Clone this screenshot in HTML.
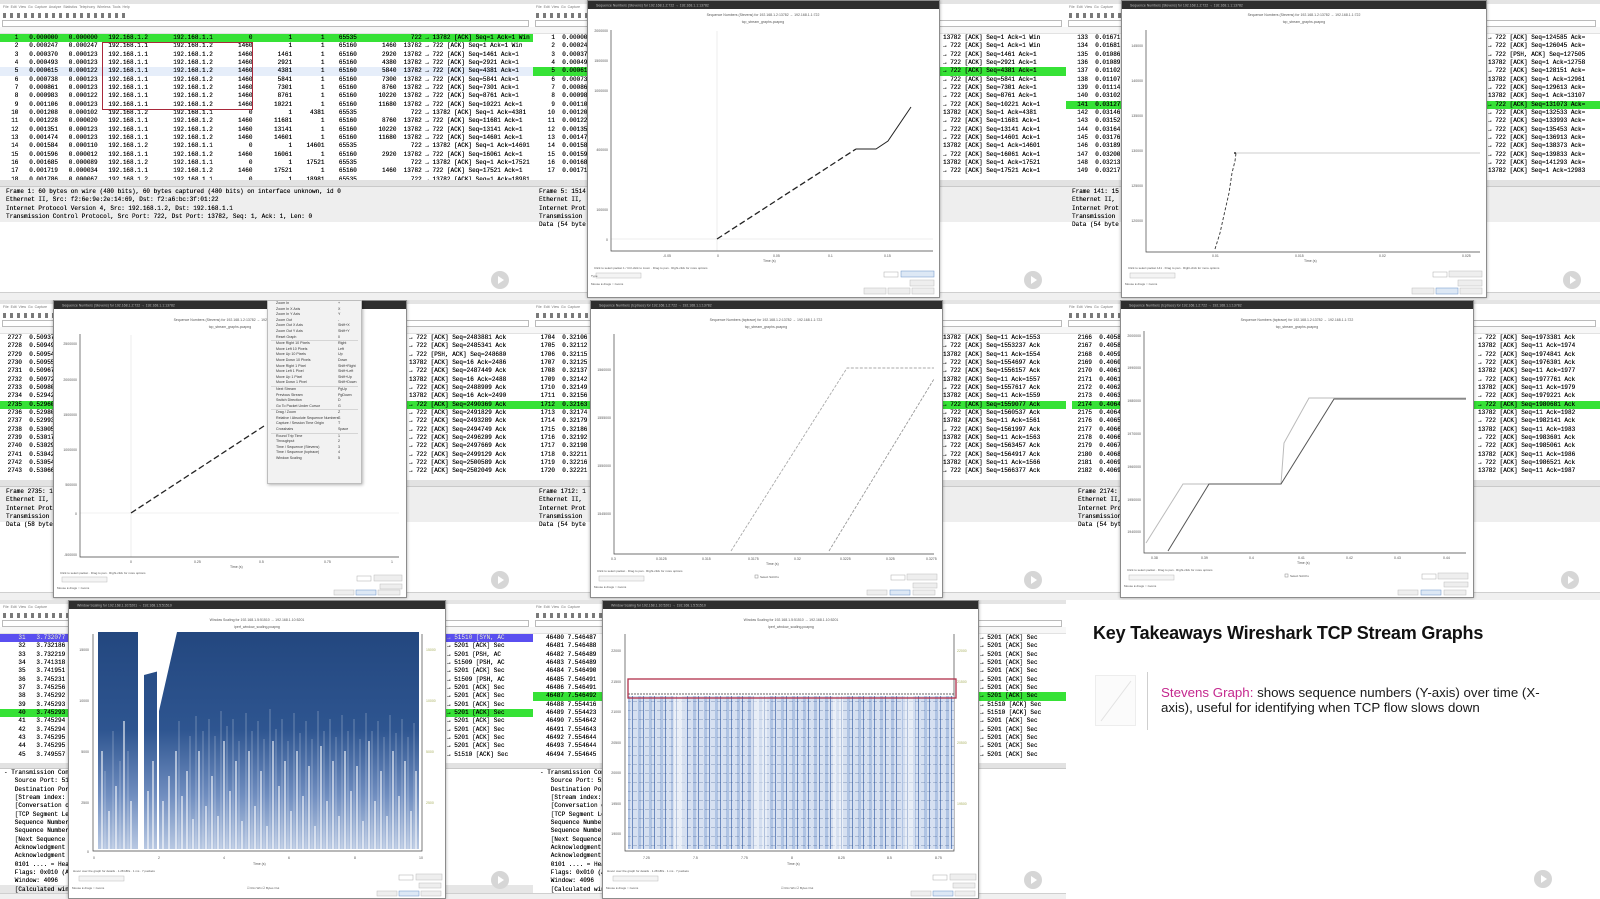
<!DOCTYPE html>
<html><head><meta charset="utf-8"><style>
body{margin:0;width:1600px;height:899px;position:relative;overflow:hidden;background:#fff;font-family:"Liberation Sans",sans-serif}
.c{position:absolute;width:533px;height:300px;overflow:hidden;background:#fff}
.ab{position:absolute}
.ttl{position:absolute;left:0;top:0;right:0;height:4px;background:#e4e4e4}
.mn{position:absolute;left:3px;top:4px;font-size:3.5px;color:#777;white-space:pre;line-height:7px}
.tl{position:absolute;left:3px;top:13px;width:125px;height:5px;background:repeating-linear-gradient(90deg,#7a7a7a 0 3px,transparent 3px 7px)}
.fl{position:absolute;left:2px;right:4px;top:20px;height:5px;border:1px solid #bbb;background:#fff}
.hd{position:absolute;left:0;right:0;top:27px;height:6px;background:#f7f7f7;border-bottom:1px solid #e2e2e2}
pre{margin:0;position:absolute;font:6px/8.33px "Liberation Mono","DejaVu Sans Mono",monospace;color:#000;text-shadow:0 0 .3px #000}
.g{position:absolute;left:0;right:0;height:8.33px;background:#36e236}
.sep{position:absolute;left:0;right:0;top:180px;height:6px;background:#e2e2e2;border-bottom:1px solid #c9c9c9}
.dp{position:absolute;left:0;right:0;top:187px;height:35px;background:#eeeeee}
.sb{position:absolute;left:0;right:0;top:292px;height:8px;background:#f0f0f0;border-top:1px solid #cfcfcf}
.pl{position:absolute;left:491px;top:271px;width:18px;height:18px;border-radius:50%;background:#d6d6d6}
.pl:after{content:"";position:absolute;left:7px;top:5px;border-left:6px solid #fff;border-top:4px solid transparent;border-bottom:4px solid transparent}
.dlg{position:absolute;top:0;background:#fff;border:1px solid #8c8c8c;box-shadow:0 0 3px rgba(0,0,0,.35)}
.dlg svg{display:block}
.menu{position:absolute;background:#f2f2f2;border:1px solid #bdbdbd;font-size:3.6px;color:#333;box-shadow:1px 1px 3px rgba(0,0,0,.3)}
.menu div{height:5.6px;line-height:5.6px;padding-left:8px;position:relative;white-space:nowrap}
.menu div b{position:absolute;left:70px;font-weight:normal}
.menu hr{border:0;border-top:1px solid #d5d5d5;margin:0 3px}
</style></head><body>

<!-- ===== CELL A ===== -->
<div class="c" style="left:0;top:0">
<div class="ttl"></div><div class="mn">File  Edit  View  Go  Capture  Analyze  Statistics  Telephony  Wireless  Tools  Help</div><div class="tl"></div><div class="fl"></div><div class="hd"></div>
<div class="g" style="top:34px"></div>
<div class="ab" style="left:0;right:0;top:67.3px;height:8.33px;background:#e6eefa"></div>
<pre style="left:4px;top:34px;height:146px;overflow:hidden">   1   0.000000   0.000000   192.168.1.2       192.168.1.1          0          1        1    65535               722 → 13782 [ACK] Seq=1 Ack=1 Win
   2   0.000247   0.000247   192.168.1.1       192.168.1.2       1460          1        1    65160       1460  13782 → 722 [ACK] Seq=1 Ack=1 Win
   3   0.000370   0.000123   192.168.1.1       192.168.1.2       1460       1461        1    65160       2920  13782 → 722 [ACK] Seq=1461 Ack=1
   4   0.000493   0.000123   192.168.1.1       192.168.1.2       1460       2921        1    65160       4380  13782 → 722 [ACK] Seq=2921 Ack=1
   5   0.000615   0.000122   192.168.1.1       192.168.1.2       1460       4381        1    65160       5840  13782 → 722 [ACK] Seq=4381 Ack=1
   6   0.000738   0.000123   192.168.1.1       192.168.1.2       1460       5841        1    65160       7300  13782 → 722 [ACK] Seq=5841 Ack=1
   7   0.000861   0.000123   192.168.1.1       192.168.1.2       1460       7301        1    65160       8760  13782 → 722 [ACK] Seq=7301 Ack=1
   8   0.000983   0.000122   192.168.1.1       192.168.1.2       1460       8761        1    65160      10220  13782 → 722 [ACK] Seq=8761 Ack=1
   9   0.001106   0.000123   192.168.1.1       192.168.1.2       1460      10221        1    65160      11680  13782 → 722 [ACK] Seq=10221 Ack=1
  10   0.001208   0.000102   192.168.1.2       192.168.1.1          0          1     4381    65535               722 → 13782 [ACK] Seq=1 Ack=4381
  11   0.001228   0.000020   192.168.1.1       192.168.1.2       1460      11681        1    65160       8760  13782 → 722 [ACK] Seq=11681 Ack=1
  12   0.001351   0.000123   192.168.1.1       192.168.1.2       1460      13141        1    65160      10220  13782 → 722 [ACK] Seq=13141 Ack=1
  13   0.001474   0.000123   192.168.1.1       192.168.1.2       1460      14601        1    65160      11680  13782 → 722 [ACK] Seq=14601 Ack=1
  14   0.001584   0.000110   192.168.1.2       192.168.1.1          0          1    14601    65535               722 → 13782 [ACK] Seq=1 Ack=14601
  15   0.001596   0.000012   192.168.1.1       192.168.1.2       1460      16061        1    65160       2920  13782 → 722 [ACK] Seq=16061 Ack=1
  16   0.001685   0.000089   192.168.1.2       192.168.1.1          0          1    17521    65535               722 → 13782 [ACK] Seq=1 Ack=17521
  17   0.001719   0.000034   192.168.1.1       192.168.1.2       1460      17521        1    65160       1460  13782 → 722 [ACK] Seq=17521 Ack=1
  18   0.001786   0.000067   192.168.1.2       192.168.1.1          0          1    18981    65535               722 → 13782 [ACK] Seq=1 Ack=18981</pre>
<div class="ab" style="left:102px;top:42px;width:149px;height:66px;border:1px solid #a8283a"></div>
<div class="sep"></div><div class="dp"></div>
<pre style="left:6px;top:188px">Frame 1: 60 bytes on wire (480 bits), 60 bytes captured (480 bits) on interface unknown, id 0
Ethernet II, Src: f2:6e:9e:2e:14:69, Dst: f2:a6:bc:3f:01:22
Internet Protocol Version 4, Src: 192.168.1.2, Dst: 192.168.1.1
Transmission Control Protocol, Src Port: 722, Dst Port: 13782, Seq: 1, Ack: 1, Len: 0</pre>
<div class="sb"></div><div class="pl"></div>
</div>

<!-- ===== CELL B ===== -->
<div class="c" style="left:533px;top:0">
<div class="ttl"></div><div class="mn">File  Edit  View  Go  Capture</div><div class="tl"></div><div class="fl"></div><div class="hd"></div>
<div class="g" style="top:67.3px"></div>
<pre style="left:4px;top:34px">    1  0.00000
    2  0.00024
    3  0.00037
    4  0.00049
    5  0.00061
    6  0.00073
    7  0.00086
    8  0.00098
    9  0.00110
   10  0.00120
   11  0.00122
   12  0.00135
   13  0.00147
   14  0.00158
   15  0.00159
   16  0.00168
   17  0.00171</pre>
<pre style="left:410px;top:34px">13782 [ACK] Seq=1 Ack=1 Win
→ 722 [ACK] Seq=1 Ack=1 Win
→ 722 [ACK] Seq=1461 Ack=1
→ 722 [ACK] Seq=2921 Ack=1
→ 722 [ACK] Seq=4381 Ack=1
→ 722 [ACK] Seq=5841 Ack=1
→ 722 [ACK] Seq=7301 Ack=1
→ 722 [ACK] Seq=8761 Ack=1
→ 722 [ACK] Seq=10221 Ack=1
13782 [ACK] Seq=1 Ack=4381
→ 722 [ACK] Seq=11681 Ack=1
→ 722 [ACK] Seq=13141 Ack=1
→ 722 [ACK] Seq=14601 Ack=1
13782 [ACK] Seq=1 Ack=14601
→ 722 [ACK] Seq=16061 Ack=1
13782 [ACK] Seq=1 Ack=17521
→ 722 [ACK] Seq=17521 Ack=1</pre>
<div class="sep"></div><div class="dp"></div>
<pre style="left:6px;top:188px">Frame 5: 1514
Ethernet II,
Internet Prot
Transmission
Data (54 byte</pre>
<div class="sb"></div><div class="pl"></div>
<div class="dlg" style="left:54px;width:351px;height:296px">
<svg width="351" height="296" font-family="Liberation Sans" font-size="3.5" fill="#555">
<rect width="351" height="8" fill="#2e2e2e"/><text x="8" y="5.5" fill="#bbb">Sequence Numbers (Stevens) for 192.168.1.2:722 → 192.168.1.1:13782</text>
<text x="175" y="15" text-anchor="middle">Sequence Numbers (Stevens) for 192.168.1.2:13782 → 192.168.1.1:722</text><text x="175" y="22" text-anchor="middle">tcp_stream_graphs.pcapng</text>
<line x1="129" y1="30" x2="129" y2="250" stroke="#e2e2e2" stroke-width=".6"/><line x1="23" y1="238" x2="345" y2="238" stroke="#ddd" stroke-width=".6"/>
<path d="M23 29V250H345" fill="none" stroke="#444" stroke-width=".7"/>
<text x="20" y="31" text-anchor="end">2000000</text><text x="20" y="61" text-anchor="end">1500000</text><text x="20" y="91" text-anchor="end">1000000</text><text x="20" y="150" text-anchor="end">400000</text><text x="20" y="210" text-anchor="end">100000</text><text x="20" y="240" text-anchor="end">0</text>
<text x="75" y="256">-0.05</text><text x="129" y="256">0</text><text x="185" y="256">0.05</text><text x="240" y="256">0.1</text><text x="296" y="256">0.15</text><text x="175" y="261">Time (s)</text>
<path d="M129 238L268 148" stroke="#222" stroke-width="1.3" stroke-dasharray="6 3" fill="none"/>
<path d="M268 148H288L300 140L323 106" stroke="#222" stroke-width="1" fill="none"/>
<text x="6" y="268" font-size="3">Click to select packet 1 / Ctrl-click to zoom · Drag to pan · Right-click for more options</text>
<rect x="8" y="272" width="45" height="5" fill="#f4f4f4" stroke="#bbb" stroke-width=".5"/><text x="3" y="276" font-size="3">Type</text>
<text x="3" y="284" font-size="3">Mouse ● drags ○ zooms</text>
<rect x="296" y="271" width="14" height="5" fill="#fff" stroke="#aaa" stroke-width=".5"/><rect x="313" y="270" width="33" height="6" fill="#dde8f5" stroke="#6a93c8" stroke-width=".5"/>
<rect x="322" y="279" width="24" height="6" fill="#eee" stroke="#bbb" stroke-width=".5"/>
<rect x="276" y="287" width="22" height="6" fill="#eee" stroke="#bbb" stroke-width=".5"/><rect x="300" y="287" width="22" height="6" fill="#eee" stroke="#bbb" stroke-width=".5"/><rect x="324" y="287" width="22" height="6" fill="#eee" stroke="#bbb" stroke-width=".5"/>
</svg></div>
</div>

<!-- ===== CELL C ===== -->
<div class="c" style="left:1066px;top:0;width:534px">
<div class="ttl"></div><div class="mn">File  Edit  View  Go  Capture</div><div class="tl"></div><div class="fl"></div><div class="hd"></div>
<div class="g" style="top:100.6px"></div>
<pre style="left:4px;top:34px">  133  0.01671
  134  0.01681
  135  0.01086
  136  0.01089
  137  0.01102
  138  0.01107
  139  0.01114
  140  0.03102
  141  0.03127
  142  0.03146
  143  0.03152
  144  0.03164
  145  0.03176
  146  0.03189
  147  0.03200
  148  0.03213
  149  0.03217</pre>
<pre style="left:422px;top:34px">→ 722 [ACK] Seq=124585 Ack=
→ 722 [ACK] Seq=126045 Ack=
→ 722 [PSH, ACK] Seq=127505
13782 [ACK] Seq=1 Ack=12758
→ 722 [ACK] Seq=128151 Ack=
13782 [ACK] Seq=1 Ack=12961
→ 722 [ACK] Seq=129613 Ack=
13782 [ACK] Seq=1 Ack=13107
→ 722 [ACK] Seq=131073 Ack=
→ 722 [ACK] Seq=132533 Ack=
→ 722 [ACK] Seq=133993 Ack=
→ 722 [ACK] Seq=135453 Ack=
→ 722 [ACK] Seq=136913 Ack=
→ 722 [ACK] Seq=138373 Ack=
→ 722 [ACK] Seq=139833 Ack=
→ 722 [ACK] Seq=141293 Ack=
13782 [ACK] Seq=1 Ack=12983</pre>
<div class="sep"></div><div class="dp"></div>
<pre style="left:6px;top:188px">Frame 141: 15
Ethernet II,
Internet Prot
Transmission
Data (54 byte</pre>
<div class="sb"></div><div class="pl" style="left:497px"></div>
<div class="dlg" style="left:55px;width:364px;height:296px">
<svg width="364" height="296" font-family="Liberation Sans" font-size="3.5" fill="#555">
<rect width="364" height="8" fill="#2e2e2e"/><text x="8" y="5.5" fill="#bbb">Sequence Numbers (Stevens) for 192.168.1.2:722 → 192.168.1.1:13782</text>
<text x="182" y="15" text-anchor="middle">Sequence Numbers (Stevens) for 192.168.1.2:13782 → 192.168.1.1:722</text><text x="182" y="22" text-anchor="middle">tcp_stream_graphs.pcapng</text>
<path d="M24 29V251H358" fill="none" stroke="#444" stroke-width=".7"/>
<text x="21" y="46" text-anchor="end">145000</text><text x="21" y="81" text-anchor="end">140000</text><text x="21" y="116" text-anchor="end">135000</text><text x="21" y="151" text-anchor="end">130000</text><text x="21" y="186" text-anchor="end">125000</text><text x="21" y="221" text-anchor="end">120000</text>
<text x="90" y="256">0.01</text><text x="173" y="256">0.015</text><text x="257" y="256">0.02</text><text x="340" y="256">0.025</text><text x="182" y="261">Time (s)</text>
<path d="M93 248L98 232L102 214L107 192L110 172L113 160L114 152" stroke="#333" stroke-width=".9" stroke-dasharray="3 2" fill="none"/>
<path d="M114 152H358" stroke="#999" stroke-width=".6" fill="none"/><circle cx="113" cy="152" r="1" fill="#333"/>
<text x="6" y="268" font-size="3">Click to select packet 141 · Drag to pan · Right-click for more options</text>
<rect x="8" y="272" width="45" height="5" fill="#f4f4f4" stroke="#bbb" stroke-width=".5"/><text x="3" y="284" font-size="3">Mouse ● drags ○ zooms</text>
<rect x="311" y="271" width="14" height="5" fill="#fff" stroke="#aaa" stroke-width=".5"/><rect x="327" y="270" width="33" height="6" fill="#eee" stroke="#bbb" stroke-width=".5"/>
<rect x="336" y="279" width="24" height="6" fill="#eee" stroke="#bbb" stroke-width=".5"/>
<rect x="290" y="287" width="22" height="6" fill="#eee" stroke="#bbb" stroke-width=".5"/><rect x="314" y="287" width="22" height="6" fill="#dde8f5" stroke="#6a93c8" stroke-width=".5"/><rect x="338" y="287" width="22" height="6" fill="#eee" stroke="#bbb" stroke-width=".5"/>
</svg></div>
</div>

<!-- ===== CELL D ===== -->
<div class="c" style="left:0;top:300px">
<div class="ttl"></div><div class="mn">File  Edit  View  Go  Capture</div><div class="tl"></div><div class="fl"></div><div class="hd"></div>
<div class="g" style="top:100.6px"></div>
<pre style="left:4px;top:34px"> 2727  0.50937
 2728  0.50949
 2729  0.50954
 2730  0.50955
 2731  0.50967
 2732  0.50972
 2733  0.50980
 2734  0.52942
 2735  0.52960
 2736  0.52980
 2737  0.52993
 2738  0.53005
 2739  0.53017
 2740  0.53029
 2741  0.53042
 2742  0.53054
 2743  0.53066</pre>
<pre style="left:409px;top:34px">→ 722 [ACK] Seq=2483881 Ack
→ 722 [ACK] Seq=2485341 Ack
→ 722 [PSH, ACK] Seq=248680
13782 [ACK] Seq=16 Ack=2486
→ 722 [ACK] Seq=2487449 Ack
13782 [ACK] Seq=16 Ack=2488
→ 722 [ACK] Seq=2488909 Ack
13782 [ACK] Seq=16 Ack=2490
→ 722 [ACK] Seq=2490369 Ack
→ 722 [ACK] Seq=2491829 Ack
→ 722 [ACK] Seq=2493289 Ack
→ 722 [ACK] Seq=2494749 Ack
→ 722 [ACK] Seq=2496209 Ack
→ 722 [ACK] Seq=2497669 Ack
→ 722 [ACK] Seq=2499129 Ack
→ 722 [ACK] Seq=2500589 Ack
→ 722 [ACK] Seq=2502049 Ack</pre>
<div class="sep"></div><div class="dp"></div>
<pre style="left:6px;top:188px">Frame 2735: 1
Ethernet II,
Internet Prot
Transmission
Data (58 byte</pre>
<div class="sb"></div><div class="pl"></div>
<div class="dlg" style="left:53px;width:352px;height:296px">
<svg width="352" height="296" font-family="Liberation Sans" font-size="3.5" fill="#555">
<rect width="352" height="8" fill="#2e2e2e"/><text x="8" y="5.5" fill="#bbb">Sequence Numbers (Stevens) for 192.168.1.2:722 → 192.168.1.1:13782</text>
<text x="176" y="20" text-anchor="middle">Sequence Numbers (Stevens) for 192.168.1.2:13782 → 192.168.1.1:722</text><text x="176" y="27" text-anchor="middle">tcp_stream_graphs.pcapng</text>
<line x1="77" y1="34" x2="77" y2="256" stroke="#e2e2e2" stroke-width=".6"/><line x1="26" y1="212" x2="345" y2="212" stroke="#e2e2e2" stroke-width=".6"/>
<path d="M26 33V256H345" fill="none" stroke="#444" stroke-width=".7"/>
<text x="23" y="44" text-anchor="end">2500000</text><text x="23" y="80" text-anchor="end">2000000</text><text x="23" y="115" text-anchor="end">1500000</text><text x="23" y="150" text-anchor="end">1000000</text><text x="23" y="185" text-anchor="end">500000</text><text x="23" y="214" text-anchor="end">0</text><text x="23" y="255" text-anchor="end">-500000</text>
<text x="76" y="262">0</text><text x="140" y="262">0.25</text><text x="205" y="262">0.5</text><text x="270" y="262">0.75</text><text x="337" y="262">1</text><text x="176" y="267">Time (s)</text>
<path d="M77 212L210 125" stroke="#222" stroke-width="1.3" stroke-dasharray="6 3" fill="none"/>
<text x="6" y="273" font-size="3">Click to select packet · Drag to pan · Right-click for more options</text>
<rect x="8" y="276" width="45" height="5" fill="#f4f4f4" stroke="#bbb" stroke-width=".5"/><text x="3" y="288" font-size="3">Mouse ● drags ○ zooms</text>
<rect x="303" y="275" width="14" height="5" fill="#fff" stroke="#aaa" stroke-width=".5"/><rect x="320" y="274" width="28" height="6" fill="#eee" stroke="#bbb" stroke-width=".5"/>
<rect x="326" y="283" width="22" height="5" fill="#eee" stroke="#bbb" stroke-width=".5"/>
<rect x="280" y="289" width="20" height="5" fill="#eee" stroke="#bbb" stroke-width=".5"/><rect x="302" y="289" width="20" height="5" fill="#dde8f5" stroke="#6a93c8" stroke-width=".5"/><rect x="324" y="289" width="22" height="5" fill="#eee" stroke="#bbb" stroke-width=".5"/>
</svg></div>
<div class="menu" style="left:267px;top:0;width:93px;height:182px">
<div>Zoom In<b>+</b></div><div>Zoom In X Axis<b>X</b></div><div>Zoom In Y Axis<b>Y</b></div><div>Zoom Out<b>-</b></div><div>Zoom Out X Axis<b>Shift+X</b></div><div>Zoom Out Y Axis<b>Shift+Y</b></div><div>Reset Graph<b>0</b></div><hr>
<div>Move Right 10 Pixels<b>Right</b></div><div>Move Left 10 Pixels<b>Left</b></div><div>Move Up 10 Pixels<b>Up</b></div><div>Move Down 10 Pixels<b>Down</b></div><div>Move Right 1 Pixel<b>Shift+Right</b></div><div>Move Left 1 Pixel<b>Shift+Left</b></div><div>Move Up 1 Pixel<b>Shift+Up</b></div><div>Move Down 1 Pixel<b>Shift+Down</b></div><hr>
<div>Next Stream<b>PgUp</b></div><div>Previous Stream<b>PgDown</b></div><div>Switch Direction<b>D</b></div><div>Go To Packet Under Cursor<b>G</b></div><hr>
<div>Drag / Zoom<b>Z</b></div><div>Relative / Absolute Sequence Numbers<b>S</b></div><div>Capture / Session Time Origin<b>T</b></div><div>Crosshairs<b>Space</b></div><hr>
<div>Round Trip Time<b>1</b></div><div>Throughput<b>2</b></div><div>Time / Sequence (Stevens)<b>3</b></div><div>Time / Sequence (tcptrace)<b>4</b></div><div>Window Scaling<b>5</b></div>
</div>
</div>

<!-- ===== CELL E ===== -->
<div class="c" style="left:533px;top:300px">
<div class="ttl"></div><div class="mn">File  Edit  View  Go  Capture</div><div class="tl"></div><div class="fl"></div><div class="hd"></div>
<div class="g" style="top:100.6px"></div>
<pre style="left:4px;top:34px"> 1704  0.32106
 1705  0.32112
 1706  0.32115
 1707  0.32125
 1708  0.32137
 1709  0.32142
 1710  0.32149
 1711  0.32156
 1712  0.32163
 1713  0.32174
 1714  0.32179
 1715  0.32186
 1716  0.32192
 1717  0.32198
 1718  0.32211
 1719  0.32216
 1720  0.32221</pre>
<pre style="left:410px;top:34px">13782 [ACK] Seq=11 Ack=1553
→ 722 [ACK] Seq=1553237 Ack
13782 [ACK] Seq=11 Ack=1554
→ 722 [ACK] Seq=1554697 Ack
→ 722 [ACK] Seq=1556157 Ack
13782 [ACK] Seq=11 Ack=1557
→ 722 [ACK] Seq=1557617 Ack
13782 [ACK] Seq=11 Ack=1559
→ 722 [ACK] Seq=1559077 Ack
→ 722 [ACK] Seq=1560537 Ack
13782 [ACK] Seq=11 Ack=1561
→ 722 [ACK] Seq=1561997 Ack
13782 [ACK] Seq=11 Ack=1563
→ 722 [ACK] Seq=1563457 Ack
→ 722 [ACK] Seq=1564917 Ack
13782 [ACK] Seq=11 Ack=1566
→ 722 [ACK] Seq=1566377 Ack</pre>
<div class="sep"></div><div class="dp"></div>
<pre style="left:6px;top:188px">Frame 1712: 1
Ethernet II,
Internet Prot
Transmission
Data (54 byte</pre>
<div class="sb"></div><div class="pl"></div>
<div class="dlg" style="left:57px;width:351px;height:296px">
<svg width="351" height="296" font-family="Liberation Sans" font-size="3.5" fill="#555">
<rect width="351" height="8" fill="#2e2e2e"/><text x="8" y="5.5" fill="#bbb">Sequence Numbers (tcptrace) for 192.168.1.2:722 → 192.168.1.1:13782</text>
<text x="175" y="20" text-anchor="middle">Sequence Numbers (tcptrace) for 192.168.1.2:13782 → 192.168.1.1:722</text><text x="175" y="27" text-anchor="middle">tcp_stream_graphs.pcapng</text>
<path d="M23 33V253H343" fill="none" stroke="#444" stroke-width=".7"/>
<text x="20" y="70" text-anchor="end">1560000</text><text x="20" y="118" text-anchor="end">1555000</text><text x="20" y="166" text-anchor="end">1550000</text><text x="20" y="214" text-anchor="end">1545000</text>
<text x="20" y="259">0.3</text><text x="65" y="259">0.3125</text><text x="111" y="259">0.315</text><text x="157" y="259">0.3175</text><text x="203" y="259">0.32</text><text x="249" y="259">0.3225</text><text x="295" y="259">0.325</text><text x="335" y="259">0.3275</text><text x="175" y="264">Time (s)</text>
<path d="M140 250L256 67H343" stroke="#aaa" stroke-width=".9" stroke-dasharray="3 1.5" fill="none"/>
<path d="M238 250L343 78" stroke="#999" stroke-width=".9" stroke-dasharray="3 1.5" fill="none"/>
<text x="6" y="271" font-size="3">Click to select packet · Drag to pan · Right-click for more options</text>
<rect x="8" y="275" width="45" height="5" fill="#f4f4f4" stroke="#bbb" stroke-width=".5"/><text x="3" y="287" font-size="3">Mouse ● drags ○ zooms</text>
<rect x="164" y="274" width="3" height="3" fill="#fff" stroke="#888" stroke-width=".5"/><text x="169" y="277" font-size="3">Select SACKs</text>
<rect x="300" y="274" width="14" height="5" fill="#fff" stroke="#aaa" stroke-width=".5"/><rect x="316" y="273" width="30" height="6" fill="#eee" stroke="#bbb" stroke-width=".5"/>
<rect x="322" y="282" width="24" height="5" fill="#eee" stroke="#bbb" stroke-width=".5"/>
<rect x="276" y="289" width="20" height="5" fill="#eee" stroke="#bbb" stroke-width=".5"/><rect x="299" y="289" width="20" height="5" fill="#dde8f5" stroke="#6a93c8" stroke-width=".5"/><rect x="322" y="289" width="22" height="5" fill="#eee" stroke="#bbb" stroke-width=".5"/>
</svg></div>
</div>

<!-- ===== CELL F ===== -->
<div class="c" style="left:1066px;top:300px;width:534px">
<div class="ttl"></div><div class="mn">File  Edit  View  Go  Capture</div><div class="tl"></div><div class="fl"></div><div class="hd"></div>
<div class="g" style="top:100.6px;left:6px"></div>
<pre style="left:8px;top:34px"> 2166  0.40581
 2167  0.40588
 2168  0.40594
 2169  0.40606
 2170  0.40612
 2171  0.40618
 2172  0.40625
 2173  0.40636
 2174  0.40641
 2175  0.40648
 2176  0.40655
 2177  0.40661
 2178  0.40667
 2179  0.40675
 2180  0.40685
 2181  0.40692
 2182  0.40698</pre>
<pre style="left:412px;top:34px">→ 722 [ACK] Seq=1973381 Ack
13782 [ACK] Seq=11 Ack=1974
→ 722 [ACK] Seq=1974841 Ack
→ 722 [ACK] Seq=1976301 Ack
13782 [ACK] Seq=11 Ack=1977
→ 722 [ACK] Seq=1977761 Ack
13782 [ACK] Seq=11 Ack=1979
→ 722 [ACK] Seq=1979221 Ack
→ 722 [ACK] Seq=1980681 Ack
13782 [ACK] Seq=11 Ack=1982
→ 722 [ACK] Seq=1982141 Ack
13782 [ACK] Seq=11 Ack=1983
→ 722 [ACK] Seq=1983601 Ack
→ 722 [ACK] Seq=1985061 Ack
13782 [ACK] Seq=11 Ack=1986
→ 722 [ACK] Seq=1986521 Ack
13782 [ACK] Seq=11 Ack=1987</pre>
<div class="sep"></div><div class="dp"></div>
<pre style="left:12px;top:188px">Frame 2174: 1
Ethernet II,
Internet Prot
Transmission
Data (54 byte</pre>
<div class="sb"></div><div class="pl" style="left:495px"></div>
<div class="dlg" style="left:54px;width:352px;height:296px">
<svg width="352" height="296" font-family="Liberation Sans" font-size="3.5" fill="#555">
<rect width="352" height="8" fill="#2e2e2e"/><text x="8" y="5.5" fill="#bbb">Sequence Numbers (tcptrace) for 192.168.1.2:722 → 192.168.1.1:13782</text>
<text x="176" y="20" text-anchor="middle">Sequence Numbers (tcptrace) for 192.168.1.2:13782 → 192.168.1.1:722</text><text x="176" y="27" text-anchor="middle">tcp_stream_graphs.pcapng</text>
<path d="M23 30V252H345" fill="none" stroke="#444" stroke-width=".7"/>
<text x="20" y="36" text-anchor="end">2000000</text><text x="20" y="68" text-anchor="end">1990000</text><text x="20" y="101" text-anchor="end">1980000</text><text x="20" y="134" text-anchor="end">1970000</text><text x="20" y="167" text-anchor="end">1960000</text><text x="20" y="200" text-anchor="end">1950000</text><text x="20" y="232" text-anchor="end">1940000</text>
<text x="30" y="258">0.38</text><text x="80" y="258">0.39</text><text x="128" y="258">0.4</text><text x="177" y="258">0.41</text><text x="225" y="258">0.42</text><text x="273" y="258">0.43</text><text x="322" y="258">0.44</text><text x="176" y="263">Time (s)</text>
<path d="M25 242L62 183H160L163 142L188 97H345" stroke="#bbb" stroke-width="1" fill="none"/>
<path d="M47 250L88 183H160L213 98H345" stroke="#555" stroke-width="1" fill="none"/>
<text x="6" y="270" font-size="3">Click to select packet · Drag to pan · Right-click for more options</text>
<rect x="8" y="274" width="45" height="5" fill="#f4f4f4" stroke="#bbb" stroke-width=".5"/><text x="3" y="286" font-size="3">Mouse ● drags ○ zooms</text>
<rect x="164" y="273" width="3" height="3" fill="#fff" stroke="#888" stroke-width=".5"/><text x="169" y="276" font-size="3">Select SACKs</text>
<rect x="301" y="273" width="14" height="5" fill="#fff" stroke="#aaa" stroke-width=".5"/><rect x="317" y="272" width="30" height="6" fill="#eee" stroke="#bbb" stroke-width=".5"/>
<rect x="323" y="281" width="24" height="5" fill="#eee" stroke="#bbb" stroke-width=".5"/>
<rect x="277" y="289" width="20" height="5" fill="#eee" stroke="#bbb" stroke-width=".5"/><rect x="300" y="289" width="20" height="5" fill="#dde8f5" stroke="#6a93c8" stroke-width=".5"/><rect x="323" y="289" width="22" height="5" fill="#eee" stroke="#bbb" stroke-width=".5"/>
</svg></div>
</div>

<!-- ===== CELL G ===== -->
<div class="c" style="left:0;top:600px;height:299px">
<div class="ttl"></div><div class="mn">File  Edit  View  Go  Capture</div><div class="tl"></div><div class="fl"></div><div class="hd"></div>
<div class="g" style="top:34px;background:#5a4ff0"></div>
<div class="g" style="top:109px"></div>
<pre style="left:4px;top:34px"><span style="color:#fff">    31   3.732077</span>
    32   3.732186
    33   3.732219
    34   3.741318
    35   3.741951
    36   3.745231
    37   3.745256
    38   3.745292
    39   3.745293
    40   3.745293
    41   3.745294
    42   3.745294
    43   3.745295
    44   3.745295
    45   3.749557</pre>
<pre style="left:447px;top:34px"><span style="color:#fff">→ 51510 [SYN, AC</span>
→ 5201 [ACK] Sec
→ 5201 [PSH, AC
→ 51509 [PSH, AC
→ 5201 [ACK] Sec
→ 51509 [PSH, AC
→ 5201 [ACK] Sec
→ 5201 [ACK] Sec
→ 5201 [ACK] Sec
→ 5201 [ACK] Sec
→ 5201 [ACK] Sec
→ 5201 [ACK] Sec
→ 5201 [ACK] Sec
→ 5201 [ACK] Sec
→ 51510 [ACK] Sec</pre>
<div class="ab" style="left:0;right:0;top:163px;height:5px;background:#e2e2e2;border-bottom:1px solid #c9c9c9"></div>
<div class="ab" style="left:0;right:0;top:285px;height:8px;background:#e6e6e6"></div>
<pre style="left:4px;top:169px">- Transmission Contr
   Source Port: 515
   Destination Port
   [Stream index: 1
   [Conversation co
   [TCP Segment Len
   Sequence Number:
   Sequence Number 
   [Next Sequence N
   Acknowledgment N
   Acknowledgment n
   0101 .... = Head
   Flags: 0x010 (AC
   Window: 4096
   [Calculated wind</pre>
<div class="sb" style="top:293px"></div><div class="pl"></div>
<div class="dlg" style="left:68px;width:376px;height:297px">
<svg width="376" height="297" font-family="Liberation Sans" font-size="3.5" fill="#555">
<defs><linearGradient id="bg1" x1="0" y1="0" x2="0" y2="1"><stop offset="0" stop-color="#23477f"/><stop offset=".45" stop-color="#2e5590"/><stop offset=".75" stop-color="#6f8dbf"/><stop offset="1" stop-color="#b8c8e2"/></linearGradient></defs>
<rect width="376" height="8" fill="#2e2e2e"/><text x="8" y="5.5" fill="#bbb">Window Scaling for 192.168.1.10:5201 → 192.168.1.5:51510</text>
<text x="188" y="20" text-anchor="middle">Window Scaling for 192.168.1.5:51510 → 192.168.1.10:5201</text><text x="188" y="27" text-anchor="middle">iperf_window_scaling.pcapng</text>
<path d="M24 33V250H353V33" fill="none" stroke="#444" stroke-width=".7"/>
<rect x="29" y="31" width="321" height="217" fill="url(#bg1)"/>
<rect x="69" y="31" width="6" height="217" fill="#fff"/>
<path d="M75 31H90V70L75 74Z" fill="#fff"/>
<path d="M90 31H108L90 110Z" fill="#fff"/>
<rect x="88" y="31" width="2" height="217" fill="#fff"/>
<g stroke="#fff" stroke-width="1.1">
<path d="M33 248V150M40 248V210M47 248V185M55 248V120M62 248V200M79 248V190M84 248V160M94 248V200M100 248V175M107 248V150M113 248V195M118 248V170M124 248V218M130 248V150M137 248V205M143 248V175M149 248V215M155 248V140M161 248V190M167 248V160M173 248V220M180 248V150M186 248V205M192 248V170M198 248V225M204 248V140M210 248V185M216 248V160M222 248V210M228 248V150M234 248V195M240 248V165M246 248V225M252 248V145M258 248V200M264 248V160M270 248V215M276 248V150M282 248V190M288 248V165M294 248V220M300 248V140M306 248V200M312 248V170M318 248V215M324 248V150M330 248V195M336 248V160M342 248V210M347 248V170"/>
</g>
<g stroke="#fff" stroke-width=".5" opacity=".6">
<path d="M36 248V170M44 248V130M51 248V160M59 248V150M110 248V120M121 248V135M127 248V115M134 248V130M140 248V118M146 248V135M152 248V110M158 248V125M164 248V118M170 248V140M177 248V112M183 248V130M189 248V120M195 248V138M201 248V108M207 248V128M213 248V118M219 248V140M225 248V112M231 248V132M237 248V120M243 248V138M249 248V110M255 248V130M261 248V118M267 248V136M273 248V114M279 248V130M285 248V118M291 248V138M297 248V112M303 248V130M309 248V120M315 248V136M321 248V114M327 248V132M333 248V118M339 248V136M345 248V122"/>
</g>
<text x="20" y="50" text-anchor="end">15000</text><text x="20" y="101" text-anchor="end">10000</text><text x="20" y="152" text-anchor="end">5000</text><text x="20" y="203" text-anchor="end">2500</text><text x="20" y="252" text-anchor="end">0</text>
<text x="357" y="50" fill="#a8b060">15000</text><text x="357" y="101" fill="#a8b060">10000</text><text x="357" y="152" fill="#a8b060">5000</text><text x="357" y="203" fill="#a8b060">2500</text>
<text x="24" y="258">0</text><text x="89" y="258">2</text><text x="154" y="258">4</text><text x="219" y="258">6</text><text x="285" y="258">8</text><text x="350" y="258">10</text><text x="184" y="264">Time (s)</text>
<text x="4" y="271" font-size="3">Hover over the graph for details · 1.28 kB/s · 1 ms · 7 packets</text>
<rect x="10" y="275" width="45" height="5" fill="#f4f4f4" stroke="#bbb" stroke-width=".5"/><text x="3" y="288" font-size="3">Mouse ● drags ○ zooms</text>
<text x="178" y="288" font-size="3">☑ Rcv Win ☑ Bytes Out</text>
<rect x="330" y="274" width="14" height="5" fill="#fff" stroke="#aaa" stroke-width=".5"/><rect x="347" y="273" width="26" height="6" fill="#eee" stroke="#bbb" stroke-width=".5"/>
<rect x="350" y="282" width="22" height="5" fill="#eee" stroke="#bbb" stroke-width=".5"/>
<rect x="308" y="290" width="20" height="5" fill="#eee" stroke="#bbb" stroke-width=".5"/><rect x="330" y="290" width="20" height="5" fill="#dde8f5" stroke="#6a93c8" stroke-width=".5"/><rect x="352" y="290" width="20" height="5" fill="#eee" stroke="#bbb" stroke-width=".5"/>
</svg></div>
</div>

<!-- ===== CELL H ===== -->
<div class="c" style="left:533px;top:600px;height:299px">
<div class="ttl"></div><div class="mn">File  Edit  View  Go  Capture</div><div class="tl"></div><div class="fl"></div><div class="hd"></div>
<div class="g" style="top:92.3px"></div>
<pre style="left:13px;top:34px">46480 7.546487
46481 7.546488
46482 7.546489
46483 7.546489
46484 7.546490
46485 7.546491
46486 7.546491
46487 7.546492
46488 7.554416
46489 7.554423
46490 7.554642
46491 7.554643
46492 7.554644
46493 7.554644
46494 7.554645</pre>
<pre style="left:447px;top:34px">→ 5201 [ACK] Sec
→ 5201 [ACK] Sec
→ 5201 [ACK] Sec
→ 5201 [ACK] Sec
→ 5201 [ACK] Sec
→ 5201 [ACK] Sec
→ 5201 [ACK] Sec
→ 5201 [ACK] Sec
→ 51510 [ACK] Sec
→ 51510 [ACK] Sec
→ 5201 [ACK] Sec
→ 5201 [ACK] Sec
→ 5201 [ACK] Sec
→ 5201 [ACK] Sec
→ 5201 [ACK] Sec</pre>
<div class="ab" style="left:0;right:0;top:163px;height:5px;background:#e2e2e2;border-bottom:1px solid #c9c9c9"></div>
<pre style="left:7px;top:169px">- Transmission Contr
   Source Port: 515
   Destination Port
   [Stream index: 1
   [Conversation co
   [TCP Segment Len
   Sequence Number:
   Sequence Number 
   [Next Sequence N
   Acknowledgment N
   Acknowledgment n
   0101 .... = Head
   Flags: 0x010 (AC
   Window: 4096
   [Calculated wind</pre>
<div class="sb" style="top:293px"></div><div class="pl"></div>
<div class="dlg" style="left:69px;width:375px;height:297px">
<svg width="375" height="297" font-family="Liberation Sans" font-size="3.5" fill="#555">
<defs><pattern id="st" width="11" height="297" patternUnits="userSpaceOnUse"><rect width="11" height="297" fill="#d6e0f1"/><rect x="2" width="3" height="297" fill="#afc3e3"/><rect x="7" width="1" height="297" fill="#6f8cc0"/></pattern>
<pattern id="hl" width="375" height="9" patternUnits="userSpaceOnUse" y="1"><line x1="0" y1="0" x2="375" y2="0" stroke="#2a4a80" stroke-width=".6" stroke-dasharray="4 2"/></pattern></defs>
<rect width="375" height="8" fill="#2e2e2e"/><text x="8" y="5.5" fill="#bbb">Window Scaling for 192.168.1.10:5201 → 192.168.1.5:51510</text>
<text x="188" y="20" text-anchor="middle">Window Scaling for 192.168.1.5:51510 → 192.168.1.10:5201</text><text x="188" y="27" text-anchor="middle">iperf_window_scaling.pcapng</text>
<path d="M22 33V250H351V33" fill="none" stroke="#444" stroke-width=".7"/>
<rect x="25" y="95" width="326" height="153" fill="url(#st)"/>
<rect x="25" y="95" width="326" height="153" fill="url(#hl)"/>
<rect x="70" y="95" width="12" height="153" fill="#fff" opacity=".5"/><rect x="150" y="95" width="14" height="153" fill="#fff" opacity=".45"/><rect x="230" y="95" width="10" height="153" fill="#fff" opacity=".5"/><rect x="300" y="95" width="12" height="153" fill="#fff" opacity=".45"/>
<path d="M25 93H351" stroke="#333" stroke-width=".8" stroke-dasharray="2 1"/>
<rect x="25" y="78" width="328" height="19" fill="none" stroke="#b0304a" stroke-width="1.3"/>
<text x="18" y="51" text-anchor="end">22000</text><text x="18" y="82" text-anchor="end">21500</text><text x="18" y="112" text-anchor="end">21000</text><text x="18" y="143" text-anchor="end">20500</text><text x="18" y="173" text-anchor="end">20000</text><text x="18" y="204" text-anchor="end">19500</text><text x="18" y="234" text-anchor="end">19000</text>
<text x="354" y="51" fill="#a8b060">22000</text><text x="354" y="82" fill="#a8b060">21500</text><text x="354" y="143" fill="#a8b060">20500</text><text x="354" y="204" fill="#a8b060">19500</text>
<text x="40" y="258">7.25</text><text x="90" y="258">7.5</text><text x="138" y="258">7.75</text><text x="188" y="258">8</text><text x="235" y="258">8.25</text><text x="284" y="258">8.5</text><text x="332" y="258">8.75</text><text x="184" y="264">Time (s)</text>
<text x="4" y="271" font-size="3">Hover over the graph for details · 1.28 kB/s · 1 ms · 7 packets</text>
<rect x="10" y="275" width="45" height="5" fill="#f4f4f4" stroke="#bbb" stroke-width=".5"/><text x="3" y="288" font-size="3">Mouse ● drags ○ zooms</text>
<text x="178" y="288" font-size="3">☑ Rcv Win ☑ Bytes Out</text>
<rect x="330" y="274" width="14" height="5" fill="#fff" stroke="#aaa" stroke-width=".5"/><rect x="347" y="273" width="26" height="6" fill="#eee" stroke="#bbb" stroke-width=".5"/>
<rect x="350" y="282" width="22" height="5" fill="#eee" stroke="#bbb" stroke-width=".5"/>
<rect x="308" y="290" width="20" height="5" fill="#eee" stroke="#bbb" stroke-width=".5"/><rect x="330" y="290" width="20" height="5" fill="#dde8f5" stroke="#6a93c8" stroke-width=".5"/><rect x="352" y="290" width="20" height="5" fill="#eee" stroke="#bbb" stroke-width=".5"/>
</svg></div>
</div>

<!-- ===== CELL I (slide) ===== -->
<div class="c" style="left:1066px;top:600px;width:534px;height:299px;background:#fff">
<div class="ab" style="left:27px;top:22px;font-weight:bold;font-size:18px;line-height:22px;color:#111;white-space:nowrap;letter-spacing:-0.2px">Key Takeaways Wireshark TCP Stream Graphs</div>
<svg class="ab" style="left:29px;top:75px" width="42" height="51"><rect x="0.5" y="0.5" width="40" height="50" fill="#fbfbfb" stroke="#ededed"/><path d="M6 46L36 6" stroke="#e2e2e2" stroke-width="1"/></svg>
<div class="ab" style="left:81px;top:72px;width:1px;height:58px;background:#cfcfcf"></div>
<div class="ab" style="left:95px;top:85px;width:390px;font-size:13.3px;line-height:15px;color:#1a1a1a"><span style="color:#c4288e">Stevens Graph:</span> shows sequence numbers (Y-axis) over time (X-axis), useful for identifying when TCP flow slows down</div>
<div class="pl" style="left:468px;top:270px"></div>
</div>

</body></html>
